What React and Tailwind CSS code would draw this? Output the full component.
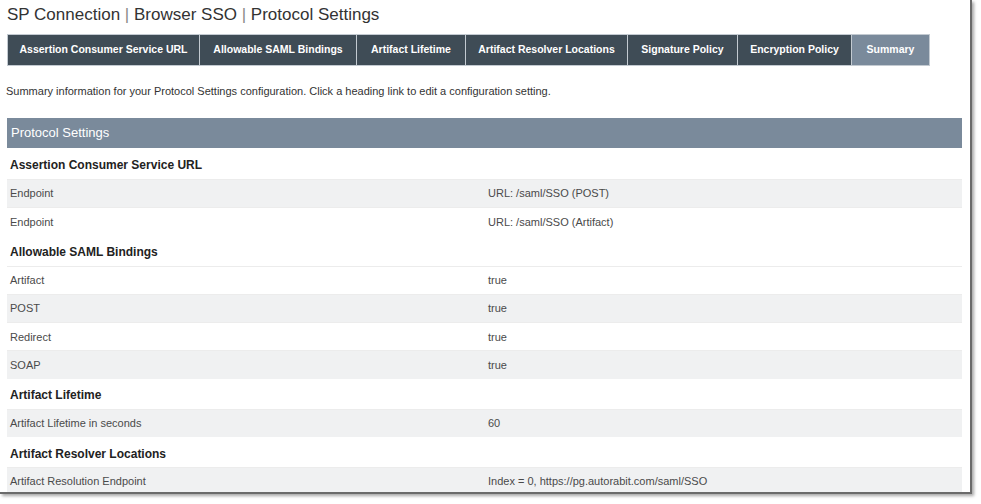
import React from "react";

const tabs = [
  { label: "Assertion Consumer Service URL", w: "w-[193px]" },
  { label: "Allowable SAML Bindings", w: "w-[157px]" },
  { label: "Artifact Lifetime", w: "w-[109px]" },
  { label: "Artifact Resolver Locations", w: "w-[162px]" },
  { label: "Signature Policy", w: "w-[110px]" },
  { label: "Encryption Policy", w: "w-[114px]" },
  { label: "Summary", w: "w-[78px]", active: true },
];

const sections = [
  {
    title: "Assertion Consumer Service URL",
    first: true,
    rows: [
      { label: "Endpoint", value: "URL: /saml/SSO (POST)", shade: true },
      { label: "Endpoint", value: "URL: /saml/SSO (Artifact)" },
    ],
  },
  {
    title: "Allowable SAML Bindings",
    rows: [
      { label: "Artifact", value: "true" },
      { label: "POST", value: "true", shade: true },
      { label: "Redirect", value: "true" },
      { label: "SOAP", value: "true", shade: true },
    ],
  },
  {
    title: "Artifact Lifetime",
    rows: [{ label: "Artifact Lifetime in seconds", value: "60", shade: true }],
  },
  {
    title: "Artifact Resolver Locations",
    rows: [
      {
        label: "Artifact Resolution Endpoint",
        value: "Index = 0, https://pg.autorabit.com/saml/SSO",
        shade: true,
      },
    ],
  },
];

export default function App() {
  return (
    <div className="w-[981px] h-[504px] bg-white overflow-hidden font-['Liberation_Sans',Arial,sans-serif]">
      {/* framed window */}
      <div className="w-[972px] h-[494px] bg-white border-r-2 border-b-2 border-[#6b6b6b] shadow-[2px_2px_3px_rgba(0,0,0,0.35)] overflow-hidden">
        <div className="pl-[7px] pr-[8px]">
          <h1 className="pt-[4px] h-[34px] text-[17px] leading-[21px] text-[#333]">
            SP Connection <span className="font-light text-[#888]">|</span> Browser SSO{" "}
            <span className="font-light text-[#888]">|</span> Protocol Settings
          </h1>

          {/* tabs */}
          <div className="flex">
            {tabs.map((t) => (
              <div
                key={t.label}
                className={`${t.w} h-[32px] flex items-center justify-center border-r border-t border-b border-[#c3cad1] first:border-l text-[10.5px] font-bold text-white whitespace-nowrap ${
                  t.active ? "bg-[#7a8a9b]" : "bg-[#3f4c56]"
                }`}
              >
                {t.label}
              </div>
            ))}
          </div>

          <p className="mt-[18px] text-[11px] leading-[14px] text-[#333] -ml-[1px]">
            Summary information for your Protocol Settings configuration. Click a heading link to edit a configuration setting.
          </p>

          {/* summary table */}
          <div className="mt-[20px] w-[955px]">
            <div className="h-[30px] bg-[#7a8a9b] flex items-center px-[4px] text-[13px] text-white">
              Protocol Settings
            </div>
            {sections.map((s) => (
              <div key={s.title}>
                <div
                  className={`${s.first ? "h-[31px]" : "h-[30px]"} pt-[3px] flex items-center px-[3px] text-[12px] font-bold text-[#222]`}
                >
                  {s.title}
                </div>
                {s.rows.map((r, i) => (
                  <div
                    key={i}
                    className={`h-[28.3px] flex items-center border-t border-[#ececec] text-[11px] text-[#4a4a4a] ${
                      r.shade ? "bg-[#f0f1f2]" : "bg-white"
                    }`}
                  >
                    <div className="w-[481px] pl-[3px]">{r.label}</div>
                    <div className="flex-1">{r.value}</div>
                  </div>
                ))}
              </div>
            ))}
          </div>
        </div>
      </div>
    </div>
  );
}
